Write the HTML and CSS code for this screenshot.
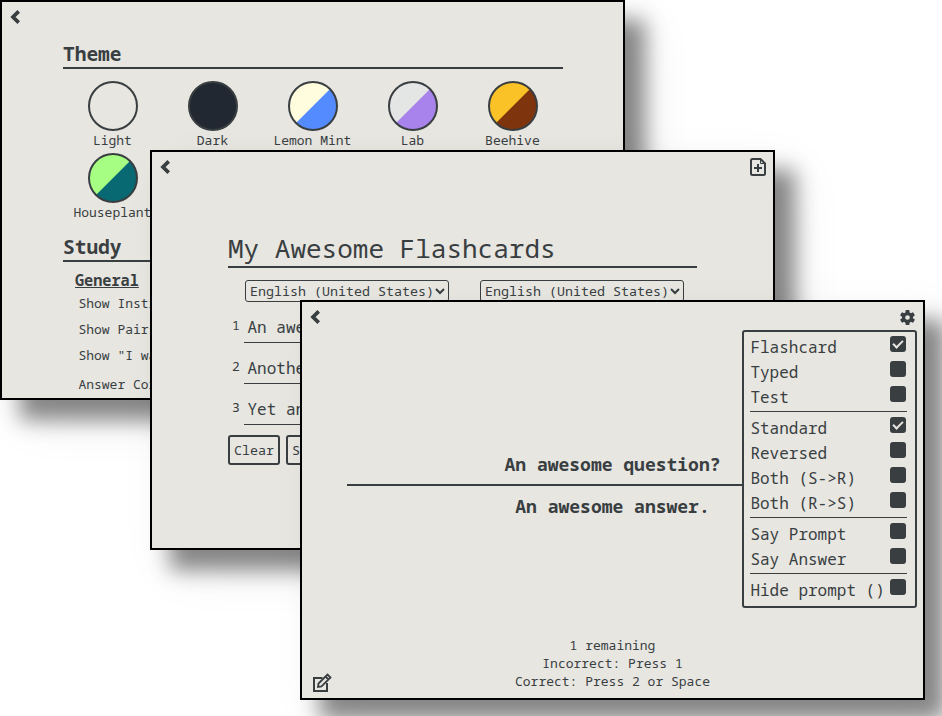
FILE: index.html
```
<!DOCTYPE html>
<html lang="en">
<head>
<meta charset="utf-8">
<title>Flashcards</title>
<link rel="stylesheet" href="styles.css">
</head>
<body>
<svg class="defs" width="0" height="0">
  <symbol id="back" viewBox="0 0 12 16"><path d="M8.700 2.400 3 8l5.700 5.600" fill="none" stroke="currentColor" stroke-width="3.700"/></symbol>
</svg>
<main class="desktop">
  <section class="window settings">
    <svg class="back" width="12" height="16"><use href="#back"/></svg>
    <div class="settings-body">
      <h2>Theme</h2>
      <div class="themes">
        <div class="theme"><span class="swatch light"></span><span class="name">Light</span></div>
        <div class="theme"><span class="swatch dark"></span><span class="name">Dark</span></div>
        <div class="theme"><span class="swatch lemon"></span><span class="name">Lemon Mint</span></div>
        <div class="theme"><span class="swatch lab"></span><span class="name">Lab</span></div>
        <div class="theme"><span class="swatch beehive"></span><span class="name">Beehive</span></div>
        <div class="theme"><span class="swatch houseplant"></span><span class="name">Houseplant</span></div>
      </div>
      <h2>Study</h2>
      <h3>General</h3>
      <ul class="options">
        <li>Show Instr</li>
        <li>Show Pairs</li>
        <li>Show "I was</li>
        <li class="spaced">Answer Corr</li>
      </ul>
    </div>
  </section>

  <section class="window editor">
    <svg class="back" width="12" height="16"><use href="#back"/></svg>
    <svg class="new-set" width="18" height="20" viewBox="0 0 18 20" fill="none" stroke="currentColor" stroke-width="2"><path d="M11.500 2H3.500Q2 2 2 3.500v13Q2 18 3.500 18h11q1.500 0 1.500-1.500V6.500z" stroke-linejoin="round"/><path d="M11.500 2v4.500H16" stroke-width="1"/><path d="M9 7v8M5 11h8"/></svg>
    <div class="editor-body">
      <h1>My Awesome Flashcards</h1>
      <div class="languages">
        <select><option>English (United States)</option></select>
        <select><option>English (United States)</option></select>
      </div>
      <ol class="cards">
        <li><span class="num">1</span><span class="term">An awesome</span></li>
        <li><span class="num">2</span><span class="term">Another</span></li>
        <li><span class="num">3</span><span class="term">Yet another</span></li>
      </ol>
      <div class="buttons"><button>Clear</button><button>Save</button></div>
    </div>
  </section>

  <section class="window study">
    <svg class="back" width="12" height="16"><use href="#back"/></svg>
    <svg class="gear" width="15" height="15" viewBox="-7.5 -7.5 15 15"><g fill="currentColor"><rect id="t" x="-2" y="-7.500" width="4" height="15" rx=".8"/><use href="#t" transform="rotate(60)"/><use href="#t" transform="rotate(120)"/></g><circle r="3.900" fill="none" stroke="currentColor" stroke-width="3.200"/><circle class="hole" r="2.300"/></svg>
    <div class="menu">
      <label>Flashcard<i class="box on"></i></label>
      <label>Typed<i class="box"></i></label>
      <label>Test<i class="box"></i></label>
      <hr>
      <label>Standard<i class="box on"></i></label>
      <label>Reversed<i class="box"></i></label>
      <label>Both (S-&gt;R)<i class="box"></i></label>
      <label>Both (R-&gt;S)<i class="box"></i></label>
      <hr>
      <label>Say Prompt<i class="box"></i></label>
      <label>Say Answer<i class="box"></i></label>
      <hr>
      <label>Hide prompt ()<i class="box"></i></label>
    </div>
    <div class="card">
      <p class="question">An awesome question?</p>
      <p class="answer">An awesome answer.</p>
    </div>
    <footer><p>1 remaining</p><p>Incorrect: Press 1</p><p>Correct: Press 2 or Space</p></footer>
    <svg class="edit" width="20" height="20" viewBox="0 0 20 20" fill="none" stroke="currentColor" stroke-width="2"><path d="M10.500 5H2v13h13v-8"/><path d="M6 14l.5-3.500 9-9 3 3-9 9zM13.500 3.500l3 3" stroke-width="1.800"/></svg>
  </section>
</main>
</body>
</html>
```
FILE: styles.css
```
* { box-sizing: border-box; }
body { margin: 0; background: #fff; color: #393e41; font: 13px/18px "Noto Sans Mono", "DejaVu Sans Mono", monospace; }
h1, h2, h3, p, ul, ol { margin: 0; padding: 0; }
ul, ol { list-style: none; }
.defs { position: absolute; }
.desktop { position: relative; width: 942px; height: 716px; overflow: hidden; }
.window { position: absolute; width: 625px; height: 400px; border: 2px solid #000; background: #e7e6e1; overflow: hidden; white-space: nowrap; box-shadow: 20px 20px 20px rgba(0, 0, 0, .45), 20px 20px 50px rgba(0, 0, 0, .07); }
.settings { left: 0; top: 0; }
.editor { left: 150px; top: 150px; }
.study { left: 300px; top: 300px; }
.back { position: absolute; left: 8px; top: 7px; }

.settings-body { width: 500px; margin: 38px 0 0 61px; }
h2 { height: 29px; border-bottom: 2px solid; font-size: 19.5px; line-height: 27px; }
.themes { display: grid; grid-template-columns: repeat(5, 100px); grid-auto-rows: 72px; padding-top: 12px; margin-bottom: 8px; }
.theme { display: flex; flex-direction: column; align-items: center; }
.name { margin-right: 1.2px; }
.swatch { width: 50px; height: 50px; border: 2px solid #393e41; border-radius: 50%; }
.dark { background: #222831; }
.lemon { background: linear-gradient(135deg, #fffddd 49.5%, #548cff 50.5%); }
.lab { background: linear-gradient(135deg, #e4e6e5 49.5%, #a783eb 50.5%); }
.beehive { background: linear-gradient(135deg, #fbc228 49.5%, #7e350d 50.5%); }
.houseplant { background: linear-gradient(135deg, #a6ff82 49.5%, #086972 50.5%); }
h3 { margin: 8px 0 0 12px; font-size: 15.21px; line-height: 21px; text-decoration: underline; }
.options { padding: 3px 0 0 15.4px; }
.options li { height: 26px; }
.options .spaced { margin-top: 3px; }

.new-set { position: absolute; right: 6px; top: 5px; }
.editor-body { width: 469px; margin: 78px 0 0 76px; }
h1 { height: 38px; border-bottom: 2px solid; font-size: 26px; font-weight: 400; line-height: 36px; }
.languages { display: flex; gap: 31px; padding: 12px 0 0 17px; }
select { width: 204px; height: 22px; padding: 0; border: 1px solid #393e41; border-radius: 3px; background: transparent; color: inherit; font: inherit; font-size: 13.333px; }
.cards { padding-top: 8px; }
.cards li { display: flex; height: 33px; margin-bottom: 8px; }
.num { width: 16px; padding: 6px 0 0 4px; }
.term { flex: 1; padding: 8px 3.5px 0; border-bottom: 1px solid; font-size: 16px; }
.buttons { display: flex; gap: 6px; padding-top: 2px; }
button { width: 52px; height: 30px; padding: 0; border: 2px solid #393e41; border-radius: 3px; background: transparent; color: inherit; font: inherit; font-size: 13.333px; }
button + button { width: 44px; }

.study { display: flex; flex-direction: column; }
.gear { position: absolute; right: 8px; top: 8px; }
.hole { fill: #e7e6e1; }
.menu { position: absolute; right: 6px; top: 28px; width: 175px; padding: 3px 8px 3px 6px; border: 2px solid #393e41; border-radius: 3px; background: #e7e6e1; font-size: 16px; line-height: 25px; }
.menu label { display: flex; justify-content: space-between; height: 25px; padding: 0 1px 0 .4px; }
.menu hr { height: 1px; margin: 1px 0 4px; border: 0; background: #393e41; }
.box { width: 16px; height: 16px; margin-top: 1px; border-radius: 3px; background: #393e41; }
.box.on { padding: 4px 0 0 3px; }
.on::before { content: ""; display: block; box-sizing: border-box; width: 10px; height: 6px; border: solid #e7e6e1; border-width: 0 0 2px 2px; transform: rotate(-45deg); }
.card { width: 531px; margin: 149px auto 0; font-size: 18px; font-weight: 700; line-height: 26px; text-align: center; }
.question { height: 35px; border-bottom: 2px solid; }
.answer { padding-top: 7px; }
footer { margin-top: 117px; text-align: center; }
.edit { position: absolute; left: 10px; bottom: 5px; }
```
